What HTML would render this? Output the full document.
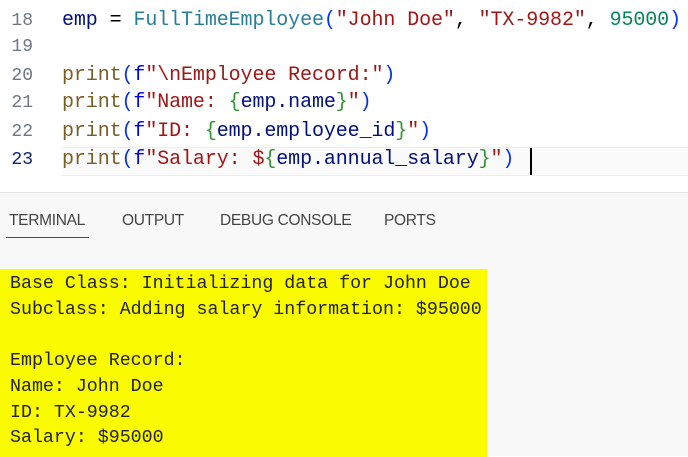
<!DOCTYPE html>
<html><head><style>
*{margin:0;padding:0;box-sizing:border-box}
body{width:688px;height:456px;overflow:hidden;background:#fff;position:relative;font-family:"Liberation Mono",monospace}
.ln{position:absolute;left:0;width:33px;text-align:right;font-size:18px;color:#6e7681;line-height:28px}
.code{position:absolute;left:62px;font-size:20px;line-height:28px;white-space:pre;letter-spacing:-0.1px}
.v{color:#001080}.c{color:#267f99}.s{color:#a31515}.n{color:#098658}.f{color:#795e26}.p{color:#0431fa}.b{color:#319331}.k{color:#0000ff}.o{color:#000}
.cur{position:absolute;left:62px;top:147px;width:626px;height:29px;background:#fafafa;border-top:1px solid #eee;border-bottom:1px solid #eee}
.panel{position:absolute;left:0;top:192px;width:688px;height:264px;background:#f8f8f8;border-top:1px solid #e5e5e5}
.tab{position:absolute;top:19px;font-family:"Liberation Sans",sans-serif;font-size:15.5px;color:#444;letter-spacing:-0.3px}
.yel{position:absolute;left:0;top:76px;width:487px;height:188px;background:#fafa00}
.t{position:absolute;left:10px;font-size:18.3px;line-height:25.7px;white-space:pre;color:#222}
</style></head><body>
<div class="cur"></div>
<div class="ln" style="top:7px">18</div>
<div class="ln" style="top:33px">19</div>
<div class="ln" style="top:62px">20</div>
<div class="ln" style="top:89px">21</div>
<div class="ln" style="top:118px">22</div>
<div class="ln" style="top:146px;color:#0b216f">23</div>
<div class="code" style="top:7px"><span class="v">emp</span> <span class="o">=</span> <span class="c">FullTimeEmployee</span><span class="p">(</span><span class="s">"John Doe"</span>, <span class="s">"TX-9982"</span>, <span class="n">95000</span><span class="p">)</span></div>
<div class="code" style="top:62px"><span class="f">print</span><span class="p">(</span><span class="k">f</span><span class="s">"\nEmployee Record:"</span><span class="p">)</span></div>
<div class="code" style="top:89px"><span class="f">print</span><span class="p">(</span><span class="k">f</span><span class="s">"Name: </span><span class="b">{</span><span class="v">emp.name</span><span class="b">}</span><span class="s">"</span><span class="p">)</span></div>
<div class="code" style="top:118px"><span class="f">print</span><span class="p">(</span><span class="k">f</span><span class="s">"ID: </span><span class="b">{</span><span class="v">emp.employee_id</span><span class="b">}</span><span class="s">"</span><span class="p">)</span></div>
<div class="code" style="top:146px"><span class="f">print</span><span class="p">(</span><span class="k">f</span><span class="s">"Salary: $</span><span class="b">{</span><span class="v">emp.annual_salary</span><span class="b">}</span><span class="s">"</span><span class="p">)</span></div>
<div style="position:absolute;left:530px;top:148px;width:2px;height:27px;background:#000"></div>
<div class="panel">
<div class="tab" style="left:9px">TERMINAL</div>
<div style="position:absolute;left:6px;top:44px;width:83px;height:1px;background:#005fb8"></div>
<div class="tab" style="left:122px">OUTPUT</div>
<div class="tab" style="left:220px">DEBUG CONSOLE</div>
<div class="tab" style="left:384px">PORTS</div>
<div class="yel"></div>
<div class="t" style="top:79px">Base Class: Initializing data for John Doe
Subclass: Adding salary information: $95000

Employee Record:
Name: John Doe
ID: TX-9982
Salary: $95000</div>
</div>
</body></html>
